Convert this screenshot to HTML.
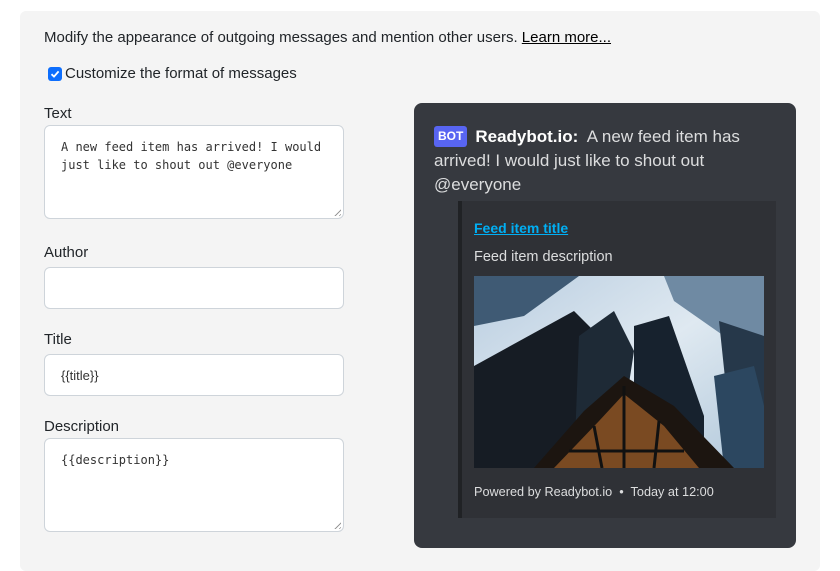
<!DOCTYPE html>
<html><head><style>
*{box-sizing:border-box;margin:0;padding:0}
body{width:840px;height:556px;background:#fff;font-family:"Liberation Sans",sans-serif;position:relative;overflow:hidden;color:#212529}
.panel{position:absolute;left:20px;top:11px;width:800px;height:560px;background:#f4f4f4;border-radius:6px}
.abs{position:absolute}
.intro{left:44px;top:29px;font-size:15px;color:#212529}
.intro a{text-decoration:underline;color:#000}
.chk{left:48px;top:65px;font-size:15px;font-weight:500;display:flex;align-items:center}
.box{width:14px;height:14px;background:#0d6efd;border-radius:3px;margin-right:3px;display:flex;align-items:center;justify-content:center}
.lbl{left:44px;font-size:15px;font-weight:500;color:#212529}
.inp{left:44px;width:300px;background:#fff;border:1px solid #ced4da;border-radius:6px;font-size:13px;padding:12px 16px}
.mono{font-family:"DejaVu Sans Mono","Liberation Mono",monospace;font-size:12px;line-height:18px;color:#333}
.grip{position:absolute;right:2px;bottom:2px;width:9px;height:9px;background:repeating-linear-gradient(135deg,transparent 0 2px,#999 2px 3px);clip-path:polygon(100% 0,100% 100%,0 100%)}
.card{left:414px;top:103px;width:382px;height:445px;background:#36393f;border-radius:8px}
.msg{left:434px;top:125px;width:340px;font-size:17px;line-height:24px;color:#dcddde}
.bot{display:inline-block;background:#5865f2;color:#fff;font-size:12px;font-weight:bold;padding:0 4px;height:21px;line-height:21px;border-radius:3px;vertical-align:2px;margin-right:8px}
.embed{left:458px;top:201px;width:318px;height:317px;background:#2f3136;border-left:4px solid #202225}
</style></head><body>
<div class="panel"></div>
<div class="abs intro">Modify the appearance of outgoing messages and mention other users. <a>Learn more...</a></div>
<div class="abs chk"><div class="box"><svg width="10" height="10" viewBox="0 0 10 10"><path d="M1.5 5.2L4 7.6 8.6 2.4" stroke="#fff" stroke-width="1.8" fill="none"/></svg></div>Customize the format of messages</div>
<div class="abs lbl" style="top:105px">Text</div>
<div class="abs inp mono" style="top:125px;height:94px">A new feed item has arrived! I would just like to shout out @everyone<div class="grip"></div></div>
<div class="abs lbl" style="top:244px">Author</div>
<div class="abs inp" style="top:267px;height:42px"></div>
<div class="abs lbl" style="top:331px">Title</div>
<div class="abs inp" style="top:354px;height:42px;padding-top:13px;color:#333">{{title}}</div>
<div class="abs lbl" style="top:418px">Description</div>
<div class="abs inp mono" style="top:438px;height:94px">{{description}}<div class="grip"></div></div>
<div class="abs card"></div>
<div class="abs msg"><span class="bot">BOT</span><b style="color:#fff">Readybot.io:</b>&nbsp; A new feed item has arrived! I would just like to shout out @everyone</div>
<div class="abs embed"></div>
<div class="abs" style="left:474px;top:220px;font-size:14px;font-weight:bold;color:#00aff4;text-decoration:underline">Feed item title</div>
<div class="abs" style="left:474px;top:249px;font-size:14.5px;color:#dcddde">Feed item description</div>
<svg class="abs" style="left:474px;top:276px" width="290" height="192" viewBox="0 0 290 192">
<defs><linearGradient id="s" x1="0" y1="0" x2="1" y2="1"><stop offset="0" stop-color="#b9cde0"/><stop offset=".5" stop-color="#dfe9f1"/><stop offset="1" stop-color="#b0c7da"/></linearGradient></defs>
<rect width="290" height="192" fill="url(#s)"/>
<polygon points="0,0 105,0 50,40 0,50" fill="#3f5a74"/>
<polygon points="190,0 290,0 290,100 250,60 200,25" fill="#6f8aa3"/>
<polygon points="245,45 290,60 290,200 255,140" fill="#26384a"/>
<polygon points="0,90 100,35 125,60 120,192 0,192" fill="#161c24"/>
<polygon points="105,60 140,35 160,75 150,140 100,192" fill="#1e2a36"/>
<polygon points="160,50 195,40 230,140 230,192 160,192" fill="#17222e"/>
<polygon points="240,100 280,90 290,130 290,192 250,192" fill="#2c4760"/>
<polygon points="60,192 110,135 150,100 200,130 260,192" fill="#1c1510"/>
<polygon points="80,192 125,145 150,118 190,150 225,192" fill="#7a4a22"/>
<g stroke="#111" stroke-width="3"><line x1="150" y1="110" x2="150" y2="192"/><line x1="120" y1="150" x2="128" y2="192"/><line x1="185" y1="145" x2="180" y2="192"/><line x1="95" y1="175" x2="210" y2="175"/></g>
</svg>
<div class="abs" style="left:474px;top:485px;font-size:12.7px;color:#dcddde">Powered by Readybot.io &nbsp;•&nbsp; Today at 12:00</div>
</body></html>
